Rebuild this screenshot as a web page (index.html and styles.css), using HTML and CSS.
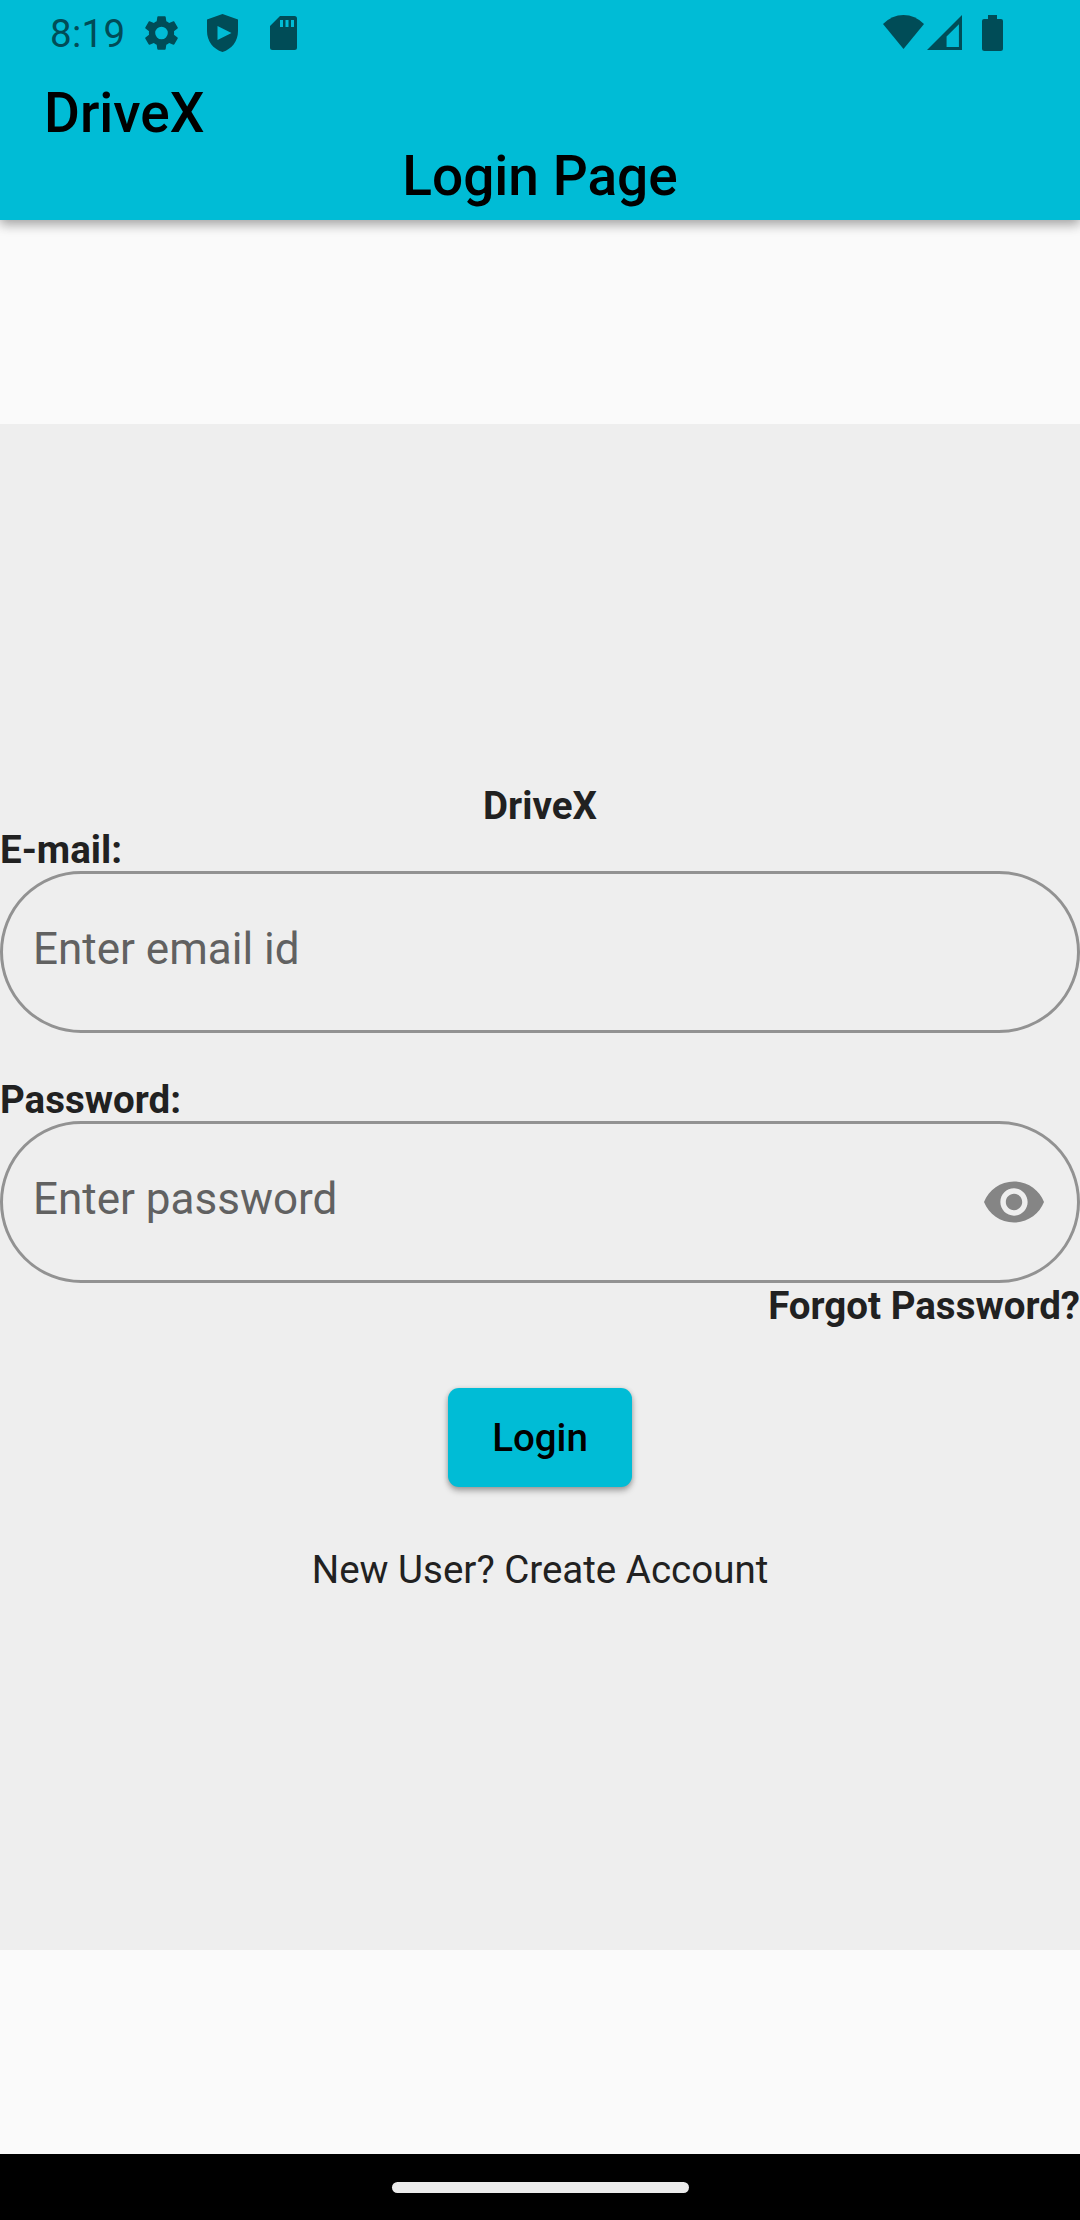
FILE: index.html
```html
<!DOCTYPE html>
<html lang="en">
<head>
<meta charset="utf-8">
<title>DriveX</title>
<link rel="stylesheet" href="styles.css">
</head>
<body>
<header class="app-bar">
  <div class="status">
    <span class="time">8:19</span>
    <svg class="icon gear" viewBox="2 2 20 20"><path d="M19.14 12.94c.04-.3.06-.61.06-.94 0-.32-.02-.64-.07-.94l2.03-1.58c.18-.14.23-.41.12-.61l-1.92-3.32c-.12-.22-.37-.29-.59-.22l-2.39.96c-.5-.38-1.03-.7-1.62-.94l-.36-2.54c-.04-.24-.24-.41-.48-.41h-3.84c-.24 0-.43.17-.47.41l-.36 2.54c-.59.24-1.13.57-1.62.94l-2.39-.96c-.22-.08-.47 0-.59.22L2.74 8.87c-.12.21-.08.47.12.61l2.03 1.58c-.05.3-.09.63-.09.94s.02.64.07.94l-2.03 1.58c-.18.14-.23.41-.12.61l1.92 3.32c.12.22.37.29.59.22l2.39-.96c.5.38 1.03.7 1.62.94l.36 2.54c.05.24.24.41.48.41h3.84c.24 0 .44-.17.47-.41l.36-2.54c.59-.24 1.13-.56 1.62-.94l2.39.96c.22.08.47 0 .59-.22l1.92-3.32c.12-.22.07-.47-.12-.61l-2.01-1.58zM12 15.6A3.6 3.6 0 1 1 12 8.4a3.6 3.6 0 0 1 0 7.2z"/></svg>
    <svg class="icon shield" viewBox="0 0 31 38"><path fill-rule="evenodd" d="M15.500 0 31 5.500V17C31 27 25 35 15.500 38 6 35 0 27 0 17V5.500ZM10.500 12V26L24.500 19Z"/></svg>
    <svg class="icon card" viewBox="0 0 27 34"><path fill-rule="evenodd" d="M10 0H24.500Q27 0 27 2.500V31.500Q27 34 24.500 34H2.500Q0 34 0 31.500V10ZM10 4V11H13V4ZM15.500 4V11H18.500V4ZM21 4V11H24V4Z"/></svg>
    <span class="spacer"></span>
    <svg class="icon wifi" viewBox="0 0 41 34"><path d="M0 9Q9 0 20.500 0T41 9L20.500 34Z"/></svg>
    <svg class="icon signal" viewBox="0 0 34 34"><path fill-rule="evenodd" d="M34 0V34H0ZM31 9 19 21V31H31Z"/></svg>
    <svg class="icon battery" viewBox="0 0 21 36"><path d="M6 0H15V4H19Q21 4 21 6V33.500Q21 36 18.500 36H2.500Q0 36 0 33.500V6Q0 4 2 4H6Z"/></svg>
  </div>
  <h1 class="title">DriveX</h1>
  <h2 class="title page-title">Login Page</h2>
</header>
<main class="content">
  <form class="panel">
    <div class="brand">DriveX</div>
    <label class="label" for="email">E-mail:</label>
    <div class="field"><input class="input" id="email" type="text" placeholder="Enter email id"></div>
    <label class="label password-label" for="password">Password:</label>
    <div class="field">
      <input class="input" id="password" type="password" placeholder="Enter password">
      <svg class="eye" viewBox="1 4.500 22 15"><path d="M12 4.500C7 4.500 2.730 7.610 1 12c1.730 4.390 6 7.500 11 7.500s9.270-3.110 11-7.500c-1.730-4.390-6-7.500-11-7.500zM12 17c-2.760 0-5-2.240-5-5s2.240-5 5-5 5 2.240 5 5-2.240 5-5 5zm0-8c-1.660 0-3 1.340-3 3s1.340 3 3 3 3-1.340 3-3-1.340-3-3-3z"/></svg>
    </div>
    <div class="forgot">Forgot Password?</div>
    <button class="login" type="button">Login</button>
    <div class="signup">New User? Create Account</div>
  </form>
</main>
<footer class="nav-bar"><div class="handle"></div></footer>
</body>
</html>
```
FILE: styles.css
```css
* { box-sizing: border-box; }
body {
  margin: 0;
  width: 1080px;
  height: 2220px;
  display: flex;
  flex-direction: column;
  overflow: hidden;
  background: #fafafa;
  color: #212121;
  font-family: Roboto, "Liberation Sans", sans-serif;
  font-size: 38.5px;
  line-height: 44px;
}
.app-bar {
  height: 220px;
  flex: none;
  background: #00bcd6;
  color: #000;
  box-shadow: 0 5px 11px rgba(0, 0, 0, 0.22), 0 2px 12px rgba(0, 0, 0, 0.2);
}
.status {
  height: 82px;
  padding: 14px 77px 0 50px;
  display: flex;
  align-items: flex-start;
  color: #004c57;
}
.time { width: 94px; line-height: 40px; letter-spacing: 0.3px; }
.icon { flex: none; fill: currentColor; }
.gear { width: 35px; height: 36px; margin-top: 1px; }
.shield { width: 31px; height: 38px; margin-left: 28px; }
.card { width: 27px; height: 34px; margin: 2px 0 0 32px; }
.spacer { flex: 1; }
.wifi { width: 41px; height: 34px; margin-top: 1px; }
.signal { width: 35px; height: 35px; margin: 1px 20px 0 3px; }
.battery { width: 21px; height: 36px; margin-top: 1px; }
.title {
  margin: 0;
  padding-left: 44px;
  font-size: 55px;
  font-weight: 500;
  line-height: 63px;
}
.page-title { padding: 0; text-align: center; }
.content { flex: 1; padding: 204px 0; }
.panel {
  height: 1526px;
  display: flex;
  flex-direction: column;
  background: #eee;
  padding-top: 360px;
}
.brand { text-align: center; font-weight: 700; }
.label { height: 43px; font-weight: 700; }
.field {
  height: 162px;
  display: flex;
  align-items: center;
  padding: 0 33px 0 30px;
  border: 3px solid #929292;
  border-radius: 81px;
}
.input {
  flex: 1;
  min-width: 0;
  height: 52px;
  margin-bottom: 6px;
  padding: 0;
  border: 0;
  outline: 0;
  background: none;
  font: 400 44px/52px Roboto, "Liberation Sans", sans-serif;
}
.input::placeholder { color: #616161; opacity: 1; }
.password-label { margin-top: 45px; }
.eye { width: 60px; height: 42px; fill: #858585; }
.forgot { margin-top: 1px; text-align: right; font-weight: 700; }
.login {
  align-self: center;
  width: 184px;
  height: 99px;
  margin-top: 60px;
  padding: 0;
  border: 0;
  border-radius: 11px;
  background: #00bcd6;
  color: #000;
  font: 500 38.5px/45px Roboto, "Liberation Sans", sans-serif;
  box-shadow: 0 4px 6px rgba(0, 0, 0, 0.28), 0 1px 5px rgba(0, 0, 0, 0.16);
}
.signup { margin-top: 61px; text-align: center; }
.nav-bar {
  height: 66px;
  flex: none;
  display: flex;
  justify-content: center;
  align-items: center;
  background: #000;
}
.handle { width: 297px; height: 11px; border-radius: 6px; background: #ebebeb; }
```
